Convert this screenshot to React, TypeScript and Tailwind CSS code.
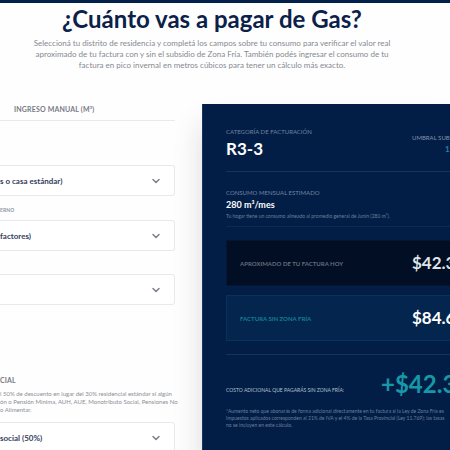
import { ChevronDown } from "lucide-react";

type SelectFieldProps = { id: string; label: string; value?: string };

function SelectField({ id, label, value = "" }: SelectFieldProps) {
  return (
    <div className="relative">
      <select
        id={id}
        aria-label={label}
        className="block h-[31px] w-full appearance-none rounded-r-[3px] border border-l-0 border-[#e7e9ed] bg-white pr-8 text-[8px] font-bold text-[#34405c]"
      >
        <option>{value}</option>
      </select>
      <ChevronDown
        aria-hidden="true"
        className="pointer-events-none absolute top-[10px] right-[13px] size-[12px] text-[#7b808a]"
        strokeWidth={3}
      />
    </div>
  );
}

function ConsumptionForm() {
  return (
    <form className="min-w-0">
      <button
        type="button"
        className="flex h-[24px] w-full items-center border-b border-[#e7e9ec] pl-[14px] text-left text-[7px] leading-[8px] font-bold tracking-wide text-[#777b83]"
      >
        INGRESO MANUAL (M³)
      </button>
      <div className="pt-[44px]">
        <SelectField id="vivienda" label="Vivienda" value="s o casa estándar)" />
      </div>
      <p className="pt-[10px] pb-[6px] text-[5px] leading-[8px] font-bold tracking-wide text-[#8d95a3]">ERNO</p>
      <SelectField id="artefactos" label="Consumo en invierno" value="factores)" />
      <div className="pt-[23px]">
        <SelectField id="opcion" label="Opción" />
      </div>
      <h2 className="pt-[70px] text-[7px] leading-[10px] font-bold tracking-wide text-[#777b83]">CIAL</h2>
      <p className="pt-[5px] pb-[8px] text-[6px] leading-[8px] whitespace-nowrap text-[#8c8f96]">
        l 50% de descuento en lugar del 30% residencial estándar si algún
        <br />
        ón o Pensión Mínima, AUH, AUE, Monotributo Social, Pensiones No
        <br />
        o Alimentar.
      </p>
      <SelectField id="social" label="Tarifa social" value="social (50%)" />
    </form>
  );
}

function BillSummary() {
  return (
    <section className="min-w-0 overflow-hidden border-l border-[#16345e] bg-[#021e46] pt-[24px] pl-[23px] whitespace-nowrap">
      <div className="flex h-[44px] justify-between border-b border-[#17335a]">
        <div>
          <p className="text-[6px] leading-[8px] text-[#7184a2]">CATEGORÍA DE FACTURACIÓN</p>
          <p className="text-[17px] leading-[26px] font-bold text-white">R3-3</p>
        </div>
        <div className="w-[38px] pt-[6px]">
          <p className="text-[6px] leading-[8px] text-[#8292ad]">UMBRAL SUBS</p>
          <p className="pt-[2px] pl-[33px] text-[8px] leading-[10px] font-bold text-[#2584a4]">1</p>
        </div>
      </div>

      <div className="h-[55px] border-b border-[#0d2950] pt-[17px]">
        <p className="text-[6px] leading-[8px] text-[#7184a2]">CONSUMO MENSUAL ESTIMADO</p>
        <p className="pt-[2px] text-[9px] leading-[11px] font-bold text-white">280 m³/mes</p>
        <p className="pt-[2px] text-[5px] leading-[8px] text-[#6a7f9f]">
          Tu hogar tiene un consumo alineado al promedio general de Junín (280 m³).
        </p>
      </div>

      <div className="grid gap-[9px] pt-[13px] pb-[13px]">
        <div className="flex h-[46px] items-center justify-between border border-r-0 border-[#061630] bg-[#010e23] pl-[13px]">
          <p className="text-[6px] font-bold text-[#626d7e]">APROXIMADO DE TU FACTURA HOY</p>
          <p className="w-[38px] text-[17px] font-bold text-[#dfe4ea]">$42.3</p>
        </div>
        <div className="flex h-[46px] items-center justify-between border border-r-0 border-[#093258] bg-[#04254d] pl-[13px]">
          <p className="text-[6px] font-bold text-[#147d96]">FACTURA SIN ZONA FRÍA</p>
          <p className="w-[38px] text-[17px] font-bold text-white">$84.6</p>
        </div>
      </div>

      <div className="border-t border-[#17335a] pt-[14px]">
        <div className="flex items-center justify-between">
          <p className="pt-[12px] text-[5px] leading-[8px] text-[#b3c0d2]">COSTO ADICIONAL QUE PAGARÁS SIN ZONA FRÍA:</p>
          <p className="w-[69px] text-[24px] leading-[30px] font-bold text-[#1798a8]">+$42.3</p>
        </div>
        <p className="pt-[9px] text-[5px] leading-[7px] text-[#6a7f9f]">
          *Aumento neto que abonarás de forma adicional directamente en tu factura si la Ley de Zona Fría es
          <br />
          Impuestos aplicados corresponden al 21% de IVA y el 4% de la Tasa Provincial (Ley 11.769); las tasas
          <br />
          no se incluyen en este cálculo.
        </p>
      </div>
    </section>
  );
}

export default function App() {
  return (
    <div className="h-screen overflow-hidden border-t-[3px] border-[#02204a] bg-[#fefefe] font-['Lato','Noto_Sans',sans-serif]">
      <header className="pr-[26px] text-center">
        <h1 className="text-[24px] leading-[32px] font-bold text-[#0b2149]">¿Cuánto vas a pagar de Gas?</h1>
        <p className="pt-[3px] text-[8px] leading-[11px] whitespace-nowrap text-[#858990]">
          Seleccioná tu distrito de residencia y completá los campos sobre tu consumo para verificar el valor real
          <br />
          aproximado de tu factura con y sin el subsidio de Zona Fría. También podés ingresar el consumo de tu
          <br />
          factura en pico invernal en metros cúbicos para tener un cálculo más exacto.
        </p>
      </header>
      <main className="grid grid-cols-[12fr_17fr] gap-[27px] pt-[26px]">
        <ConsumptionForm />
        <div className="mt-[7px] grid h-[400px] shadow-[0_20px_28px_rgba(30,30,30,0.15)]">
          <BillSummary />
        </div>
      </main>
    </div>
  );
}
